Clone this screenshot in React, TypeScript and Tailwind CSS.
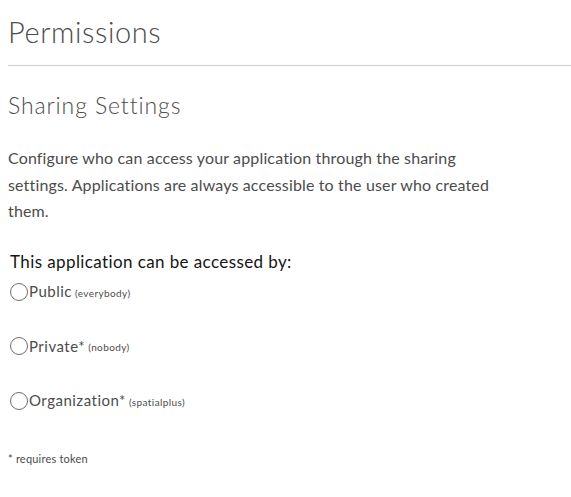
import { useState } from 'react';

const options = [
  { id: 'public', label: 'Public', note: '(everybody)' },
  { id: 'private', label: 'Private*', note: '(nobody)' },
  { id: 'org', label: 'Organization*', note: '(spatialplus)' },
];

export default function App() {
  const [access, setAccess] = useState<string | null>(null);

  return (
    <div className="min-h-screen bg-white pl-2 text-[#4c4c4c]" style={{ fontFamily: 'Lato, "Noto Sans", sans-serif' }}>
      <h1 className="pt-[14px] text-[29px] font-light leading-[36px] tracking-[0.6px]">Permissions</h1>
      <hr className="mt-[15px] border-t border-[#cccccc]" />
      <h2 className="mt-[24px] text-[23px] font-light leading-[30px] tracking-[0.9px]">Sharing Settings</h2>
      <p className="mt-[25px] w-[500px] text-[16px] leading-[26.5px] tracking-[0.15px]">
        Configure who can access your application through the sharing settings. Applications are always accessible to
        the user who created them.
      </p>

      <div className="mt-[26px] pl-[2px] text-[#151515]">
        <div className="text-[17px] leading-[22px] tracking-[0.4px]">This application can be accessed by:</div>
        <div className="mt-[8px] flex flex-col gap-[32.5px]">
          {options.map((o) => (
            <label key={o.id} className="flex h-[22px] cursor-pointer items-center text-[#4c4c4c]">
              <input
                type="radio"
                name="access"
                checked={access === o.id}
                onChange={() => setAccess(o.id)}
                className="m-0 h-[18px] w-[18px] appearance-none rounded-full border border-[#6e6e6e] bg-white checked:border-[5px] checked:border-[#0079c1]"
              />
              <span className="ml-[1px] text-[15px] tracking-[0.5px]">{o.label}</span>
              <span className="ml-[3px] mt-[3px] text-[10px] tracking-[0.4px]">{o.note}</span>
            </label>
          ))}
        </div>
      </div>

      <div className="mt-[39px] text-[11px] tracking-[0.2px] text-[#4c4c4c]">* requires token</div>
    </div>
  );
}
